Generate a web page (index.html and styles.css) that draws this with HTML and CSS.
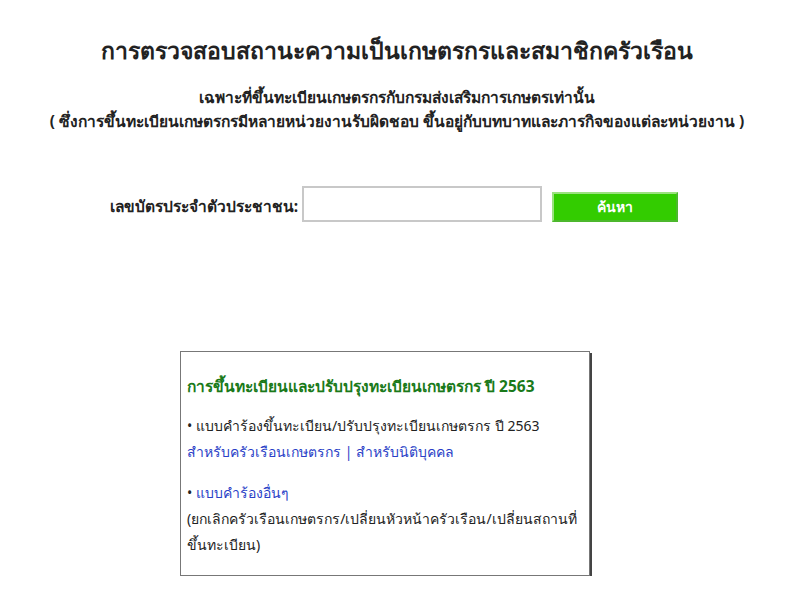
FILE: index.html
```html
<!DOCTYPE html>
<html lang="th">
<head>
    <meta charset="UTF-8">
    <title>ตรวจสอบสถานะเกษตรกร</title>
    <link rel="stylesheet" href="styles.css">
</head>
<body>
    <div class="page">
        <h1 class="title">การตรวจสอบสถานะความเป็นเกษตรกรและสมาชิกครัวเรือน</h1>
        <p class="subtitle">เฉพาะที่ขึ้นทะเบียนเกษตรกรกับกรมส่งเสริมการเกษตรเท่านั้น</p>
        <p class="subtitle">( ซึ่งการขึ้นทะเบียนเกษตรกรมีหลายหน่วยงานรับผิดชอบ ขึ้นอยู่กับบทบาทและภารกิจของแต่ละหน่วยงาน )</p>

        <form class="search-form">
            <label for="pid">เลขบัตรประจำตัวประชาชน:</label>
            <input type="text" id="pid">
            <button type="submit">ค้นหา</button>
        </form>

        <div class="info-box">
            <h3>การขึ้นทะเบียนและปรับปรุงทะเบียนเกษตรกร ปี 2563</h3>
            <p>• แบบคำร้องขึ้นทะเบียน/ปรับปรุงทะเบียนเกษตรกร ปี 2563<br>
                <a href="#">สำหรับครัวเรือนเกษตรกร</a> <span class="sep">|</span> <a href="#">สำหรับนิติบุคคล</a></p>
            <p class="gap">• <a href="#">แบบคำร้องอื่นๆ</a><br>
                <span class="nowrap">(ยกเลิกครัวเรือนเกษตรกร/เปลี่ยนหัวหน้าครัวเรือน/เปลี่ยนสถานที่</span><br>ขึ้นทะเบียน)</p>
        </div>
    </div>
</body>
</html>
```

FILE: styles.css
```css
body {
    margin: 0;
    background: #fff;
    color: #222;
    font-family: Tahoma, "Noto Sans", "DejaVu Sans", sans-serif;
}

.page {
    padding-top: 33px;
    padding-right: 6px;
    text-align: center;
}

.title {
    margin: 0 0 20px;
    font-size: 23px;
    line-height: 34px;
    font-weight: bold;
    color: #222;
}

.subtitle {
    margin: 0 0 4px;
    font-size: 15.5px;
    font-weight: bold;
    line-height: 20px;
}

/* Search row */
.search-form {
    display: flex;
    justify-content: center;
    align-items: center;
    margin-top: 55px;
    padding-right: 6px;
}

.search-form label {
    font-size: 15.5px;
    font-weight: bold;
    margin-right: 4px;
    margin-top: 4px;
}

.search-form input {
    width: 236px;
    height: 32px;
    padding: 0;
    border: 2px solid #c8c8c8;
    box-sizing: content-box;
}

.search-form button {
    width: 126px;
    height: 30px;
    margin-left: 10px;
    margin-top: 6px;
    background: #33cc00;
    color: #fff;
    font-family: inherit;
    font-size: 14px;
    font-weight: bold;
    border: 2px solid #9be27f;
    border-right-color: #4cb82c;
    border-bottom-color: #4cb82c;
}

/* Info box */
.info-box {
    width: 392px;
    margin: 129px 0 0 180px;
    padding: 21px 10px 17px 6px;
    border: 1px solid #777;
    box-shadow: 2px 2px 0 #444;
    text-align: left;
    font-size: 14px;
    line-height: 26px;
    color: #222;
}

.info-box h3 {
    margin: 0 0 14px;
    font-size: 15.5px;
    line-height: 26px;
    color: #1a7a1a;
}

.info-box p {
    margin: 0;
}

.info-box .gap {
    margin-top: 15px;
}

.info-box a,
.info-box .sep {
    color: #2a3fc7;
    text-decoration: none;
}

.nowrap {
    white-space: nowrap;
}
```
